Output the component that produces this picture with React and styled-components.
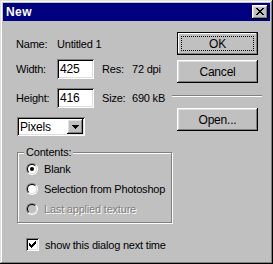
import React from 'react';
import styled, { createGlobalStyle } from 'styled-components';

const GlobalStyle = createGlobalStyle`
    html, body {
        margin: 0;
        padding: 0;
        background: #c0c0c0;
    }
    body {
        font-family: "Liberation Sans", Arial, sans-serif;
        font-size: 11px;
    }
`;

const raised = `
    box-shadow: inset -1px -1px #000, inset 1px 1px #fff, inset -2px -2px #808080, inset 2px 2px #dfdfdf;
`;

const sunken = `
    box-shadow: inset 1px 1px #808080, inset -1px -1px #fff, inset 2px 2px #000, inset -2px -2px #dfdfdf;
`;

const Window = styled.div`
    width: 273px;
    height: 264px;
    box-sizing: border-box;
    padding: 3px;
    background: #c0c0c0;
    box-shadow: inset -1px -1px #000, inset 1px 1px #dfdfdf, inset -2px -2px #808080, inset 2px 2px #fff;
    color: #000;
    letter-spacing: -0.2px;
`;

const TitleBar = styled.div`
    height: 18px;
    background: #000080;
    display: flex;
    align-items: center;
    justify-content: space-between;
    padding: 0 2px 0 3px;
`;

const Title = styled.span`
    color: #fff;
    font-weight: bold;
    font-size: 12px;
    letter-spacing: 0.4px;
`;

const CloseButton = styled.div`
    width: 16px;
    height: 14px;
    background: #c0c0c0;
    ${raised}
    display: flex;
    align-items: center;
    justify-content: center;
    padding-bottom: 1px;
    box-sizing: border-box;
`;

const Body = styled.div`
    display: grid;
    grid-template-columns: 157px 81px;
    column-gap: 4px;
    align-items: start;
    padding: 11px 0 0 13px;
`;

const Row = styled.div`
    display: flex;
    align-items: center;
    height: ${(p) => p.$h || 20}px;
    margin-top: ${(p) => p.$mt || 0}px;
    grid-column: ${(p) => (p.$span ? '1 / -1' : '1')};
`;

const Label = styled.span`
    width: ${(p) => p.$w}px;
    flex: none;
    white-space: nowrap;
`;

const Field = styled.div`
    width: 37px;
    height: 20px;
    flex: none;
    box-sizing: border-box;
    background: #fff;
    ${sunken}
    padding: 0 0 0 3px;
    display: flex;
    align-items: center;
    font-size: 12px;
    margin-right: 8px;
`;

const Groove = styled.div`
    flex: 1;
    height: 0;
    margin: 0 -4px 5px 7px;
    border-top: 1px solid #808080;
    border-bottom: 1px solid #fff;
`;

const Button = styled.div`
    grid-column: 2;
    height: 23px;
    margin-top: ${(p) => p.$mt || 0}px;
    box-sizing: border-box;
    background: #c0c0c0;
    display: flex;
    align-items: center;
    justify-content: center;
    font-size: 12px;
    ${(p) =>
        p.$default
            ? `border: 1px solid #000; box-shadow: inset -1px -1px #808080, inset 1px 1px #fff, inset -2px -2px #c0c0c0, inset 2px 2px #c0c0c0; padding: 3px;`
            : raised}
`;

const Focus = styled.div`
    flex: 1;
    align-self: stretch;
    border: 1px dotted #000;
    display: flex;
    align-items: center;
    justify-content: center;
`;

const LowerLeft = styled.div`
    grid-column: 1;
    display: flex;
    flex-direction: column;
    align-items: flex-start;
`;

const Select = styled.div`
    margin: 9px 0 0 1px;
    width: 68px;
    height: 19px;
    box-sizing: border-box;
    background: #fff;
    ${sunken}
    display: flex;
    align-items: center;
    padding: 2px;
    font-size: 12px;
`;

const SelectText = styled.span`
    flex: 1;
    padding-left: 1px;
`;

const DropButton = styled.div`
    width: 16px;
    height: 15px;
    box-sizing: border-box;
    background: #c0c0c0;
    ${raised}
    display: flex;
    align-items: center;
    justify-content: center;
`;

const Group = styled.div`
    margin: 16px 0 0 1px;
    width: 155px;
    height: 71px;
    box-sizing: border-box;
    border: 1px solid #808080;
    box-shadow: 1px 1px 0 #fff, inset 1px 1px 0 #fff;
    padding: 0 0 0 8px;
`;

const Legend = styled.span`
    display: block;
    width: fit-content;
    margin: -7px 0 0 -2px;
    padding: 0 2px;
    line-height: 13px;
    background: #c0c0c0;
`;

const Option = styled.div`
    display: flex;
    align-items: center;
    gap: 6px;
    height: 20px;
    color: ${(p) => (p.$disabled ? '#808080' : '#000')};
    text-shadow: ${(p) => (p.$disabled ? '1px 1px 0 #fff' : 'none')};
`;

const Radio = styled.span`
    width: 12px;
    height: 12px;
    box-sizing: border-box;
    border-radius: 50%;
    border: 1px solid;
    border-color: #808080 #fff #fff #808080;
    display: flex;
    flex: none;
`;

const RadioInner = styled.span`
    flex: 1;
    border-radius: 50%;
    border: 1px solid;
    border-color: #000 #dfdfdf #dfdfdf #000;
    background: ${(p) => (p.$disabled ? '#c0c0c0' : '#fff')};
    display: flex;
    align-items: center;
    justify-content: center;
`;

const Dot = styled.span`
    width: 4px;
    height: 4px;
    border-radius: 50%;
    background: #000;
`;

const CheckRow = styled.div`
    display: flex;
    align-items: center;
    gap: 6px;
    margin: 15px 0 0 10px;
`;

const Check = styled.span`
    width: 13px;
    height: 13px;
    box-sizing: border-box;
    background: #fff;
    ${sunken}
    display: flex;
    align-items: center;
    justify-content: center;
`;

const px = (rows) =>
    rows.flatMap((r, y) => [...r].map((c, x) => (c === 'x' ? <rect key={`${x}-${y}`} x={x} y={y} width="1" height="1" /> : null)));

const CloseGlyph = () => (
    <svg width="8" height="7" viewBox="0 0 8 7" shapeRendering="crispEdges" fill="#000">
        {px(['xx....xx', '.xx..xx.', '..xxxx..', '...xx...', '..xxxx..', '.xx..xx.', 'xx....xx'])}
    </svg>
);

const ArrowGlyph = () => (
    <svg width="7" height="4" viewBox="0 0 7 4" shapeRendering="crispEdges" fill="#000">
        {px(['xxxxxxx', '.xxxxx.', '..xxx..', '...x...'])}
    </svg>
);

const CheckGlyph = () => (
    <svg width="7" height="7" viewBox="0 0 7 7" shapeRendering="crispEdges" fill="#000">
        {px(['......x', '.....xx', 'x...xxx', 'xx.xxx.', 'xxxxx..', '.xxx...', '..x....'])}
    </svg>
);

const RadioOption = ({ label, checked, disabled }) => (
    <Option $disabled={disabled}>
        <Radio>
            <RadioInner $disabled={disabled}>{checked && <Dot />}</RadioInner>
        </Radio>
        <span>{label}</span>
    </Option>
);

const App = () => {
    return (
        <>
            <GlobalStyle />
            <Window>
                <TitleBar>
                    <Title>New</Title>
                    <CloseButton>
                        <CloseGlyph />
                    </CloseButton>
                </TitleBar>
                <Body>
                    <Row $h={23}>
                        <Label $w={41}>Name:</Label>
                        <span>Untitled 1</span>
                    </Row>
                    <Button $default>
                        <Focus>OK</Focus>
                    </Button>

                    <Row $mt={4}>
                        <Label $w={41}>Width:</Label>
                        <Field>425</Field>
                        <Label $w={30}>Res:</Label>
                        <span>72 dpi</span>
                    </Row>
                    <Button $mt={5}>Cancel</Button>

                    <Row $span $mt={5}>
                        <Label $w={41}>Height:</Label>
                        <Field>416</Field>
                        <Label $w={30}>Size:</Label>
                        <span>690 kB</span>
                        <Groove />
                    </Row>

                    <LowerLeft>
                        <Select>
                            <SelectText>Pixels</SelectText>
                            <DropButton>
                                <ArrowGlyph />
                            </DropButton>
                        </Select>
                        <Group>
                            <Legend>Contents:</Legend>
                            <RadioOption label="Blank" checked />
                            <RadioOption label="Selection from Photoshop" />
                            <RadioOption label="Last applied texture" disabled />
                        </Group>
                        <CheckRow>
                            <Check>
                                <CheckGlyph />
                            </Check>
                            <span>show this dialog next time</span>
                        </CheckRow>
                    </LowerLeft>
                    <Button>Open...</Button>
                </Body>
            </Window>
        </>
    );
};

export default App;
